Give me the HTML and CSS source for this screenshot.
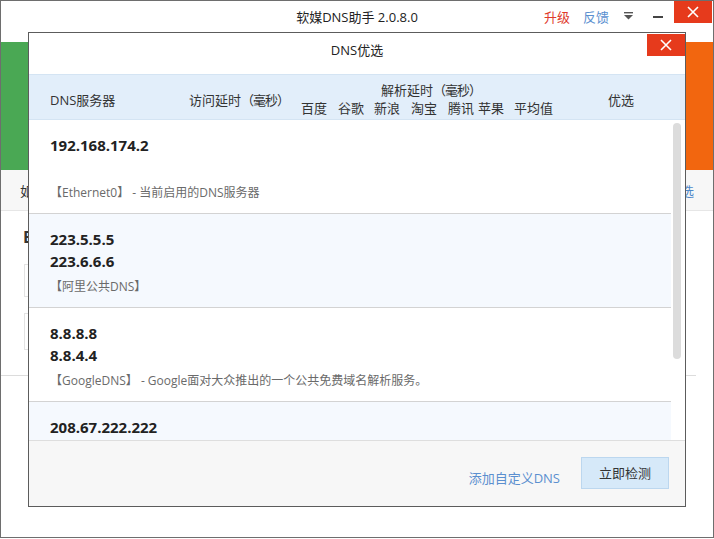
FILE: index.html
```html
<!DOCTYPE html>
<html lang="zh-CN">
<head>
<meta charset="utf-8">
<title>软媒DNS助手</title>
<link rel="stylesheet" href="styles.css">
</head>
<body>
<div class="app">
  <header class="titlebar">
    <div class="app-title">软媒DNS助手 2.0.8.0</div>
    <div class="title-actions">
      <a class="act upgrade">升级</a>
      <a class="act feedback">反馈</a>
      <span class="menu-btn"><svg width="9" height="8" viewBox="0 0 9 8"><rect x="0" y="0" width="9" height="1.4" fill="#555"/><polygon points="0,3 9,3 4.5,7.5" fill="#555"/></svg></span>
      <span class="min-btn"></span>
      <span class="close-btn"><svg width="12" height="12" viewBox="0 0 12 12"><path d="M1 1 L11 11 M11 1 L1 11" stroke="#fff" stroke-width="1.6"/></svg></span>
    </div>
  </header>
  <div class="banner"></div>
  <nav class="tabs">
    <span class="tab-left">如何选择</span>
    <span class="tab-right">一键优选</span>
  </nav>
  <section class="panel">
    <div class="panel-title">Ethernet0</div>
    <div class="field"></div>
    <div class="field field-tall"></div>
  </section>

  <div class="dialog">
    <div class="dlg-title">
      <span></span>
      <span class="dlg-name">DNS优选</span>
      <span class="dlg-close"><svg width="12" height="12" viewBox="0 0 12 12"><path d="M1 1 L11 11 M11 1 L1 11" stroke="#fff" stroke-width="1.6"/></svg></span>
    </div>
    <div class="thead">
      <div class="th th-server">DNS服务器</div>
      <div class="th th-access">访问延时<span class="paren">（毫秒）</span></div>
      <div class="th-parse">
        <div class="parse-title">解析延时<span class="paren">（毫秒）</span></div>
        <div class="parse-subs">
          <span>百度</span><span>谷歌</span><span>新浪</span><span>淘宝</span><span>腾讯</span><span>苹果</span><span>平均值</span>
        </div>
      </div>
      <div class="th th-best">优选</div>
    </div>
    <div class="list">
      <div class="rows">
        <div class="row">
          <div class="ips"><div class="ip">192.168.174.2</div></div>
          <div class="desc">【Ethernet0】 - 当前启用的DNS服务器</div>
        </div>
        <div class="row alt">
          <div class="ips"><div class="ip">223.5.5.5</div><div class="ip">223.6.6.6</div></div>
          <div class="desc">【阿里公共DNS】</div>
        </div>
        <div class="row">
          <div class="ips"><div class="ip">8.8.8.8</div><div class="ip">8.8.4.4</div></div>
          <div class="desc">【GoogleDNS】 - Google面对大众推出的一个公共免费域名解析服务。</div>
        </div>
        <div class="row alt row-last">
          <div class="ips"><div class="ip">208.67.222.222</div></div>
        </div>
      </div>
      <div class="scroll-track"><div class="scroll-thumb"></div></div>
    </div>
    <div class="dlg-footer">
      <a class="add-link">添加自定义DNS</a>
      <button class="check-btn">立即检测</button>
    </div>
  </div>
</div>
</body>
</html>
```

FILE: styles.css
```css
* { box-sizing: border-box; }
html, body { margin: 0; padding: 0; background: #fff; }
body {
  font-family: "Open Sans", "Noto Sans CJK SC", sans-serif;
  font-size: 13px;
  color: #333;
}
.app {
  position: relative;
  width: 714px;
  height: 538px;
  border: 1px solid #6e6e6e;
  background: #fff;
  overflow: hidden;
}
.titlebar {
  height: 41px;
  display: grid;
  grid-template-columns: 1fr auto 1fr;
  align-items: start;
}
.app-title {
  grid-column: 2;
  padding-top: 6px;
  line-height: 20px;
  font-size: 13px;
  color: #222;
}
.title-actions {
  grid-column: 3;
  justify-self: end;
  display: flex;
  align-items: flex-start;
}
.act { line-height: 20px; padding-top: 6px; font-size: 13px; cursor: pointer; }
.upgrade { color: #e03a2c; }
.feedback { color: #5b8fcf; margin-left: 13px; }
.menu-btn { margin-left: 15px; margin-top: 11px; display: block; height: 8px; }
.menu-btn svg { display: block; }
.min-btn { display: block; width: 10px; height: 2px; background: #444; margin-left: 20px; margin-top: 15px; }
.close-btn {
  display: flex; align-items: center; justify-content: center;
  width: 38px; height: 22px; margin-left: 11px; margin-right: 1px;
  background: #e63a1c;
}
.close-btn svg, .dlg-close svg { display: block; }
.banner {
  height: 128px;
  background: linear-gradient(to right, #4aa854 50%, #f2660f 50%);
}
.tabs {
  height: 41px;
  background: #f7f7f7;
  border-bottom: 1px solid #e6e6e6;
  display: flex;
  justify-content: space-between;
  align-items: center;
  padding: 0 19px 0 19px;
}
.tab-left { color: #333; }
.tab-right { color: #4f88c9; }
.panel {
  margin-right: 17px;
  padding: 16px 0 25px 22px;
  border-bottom: 1px solid #dcdcdc;
}
.panel-title { font-size: 16px; font-weight: bold; line-height: 20px; color: #333; }
.field { margin: 17px 30px 0 1px; height: 33px; border: 1px solid #e3e3e3; }
.field-tall { margin-top: 16px; height: 37px; }

.dialog {
  position: absolute;
  left: 27px;
  top: 31px;
  width: 658px;
  height: 475px;
  border: 1px solid #5c5c5c;
  background: #fff;
  display: flex;
  flex-direction: column;
}
.dlg-title {
  height: 41px;
  display: grid;
  grid-template-columns: 1fr auto 1fr;
  align-items: start;
}
.dlg-name { padding-top: 7px; line-height: 20px; color: #222; }
.dlg-close {
  justify-self: end;
  margin-top: 1px;
  width: 38px; height: 22px;
  background: #e63a1c;
  display: flex; align-items: center; justify-content: center;
}
.thead {
  height: 46px;
  background: #e2eefa;
  border-top: 1px solid #d4e4f3;
  border-bottom: 1px solid #d4e4f3;
  display: flex;
  align-items: flex-start;
  padding-left: 21px;
  color: #333;
}
.paren { letter-spacing: -1px; }
.th { padding-top: 16px; line-height: 18px; }
.th-server { width: 139px; }
.th-access { width: 112px; }
.th-parse { width: 307px; }
.parse-title { padding-top: 6px; line-height: 18px; margin-left: 80px; }
.parse-subs {
  display: grid;
  grid-template-columns: 37px 36px 37px 37px 30px 36px auto;
  line-height: 18px;
}
.list {
  height: 320px;
  display: flex;
}
.rows { flex: 1; overflow: hidden; }
.row {
  height: 94px;
  padding: 14px 0 10px 21px;
  border-bottom: 1px solid #d3d3d3;
  background: #fff;
}
.row.alt { background: #f5f9fe; }
.ips { height: 44px; }
.ip { line-height: 22px; font-size: 15px; font-weight: bold; color: #222; }
.desc { margin-top: 5px; line-height: 20px; font-size: 12px; color: #6a6a6a; }
.scroll-track { width: 14px; padding: 3px 4px 0 2px; }
.scroll-thumb { width: 8px; height: 236px; border-radius: 4px; background: #dcdcdc; }
.dlg-footer {
  flex: 1;
  border-top: 1px solid #dedede;
  background: #f7f7f7;
  display: flex;
  justify-content: flex-end;
  align-items: flex-start;
  padding: 16px 16px 0 0;
}
.add-link { margin-top: 11px; line-height: 20px; color: #5b8fcf; cursor: pointer; }
.check-btn {
  margin-left: 21px;
  width: 88px; height: 32px;
  border: 1px solid #bcd7ef;
  background: #d6e9f9;
  font-family: inherit;
  font-size: 13px;
  color: #333;
  line-height: 30px;
  padding: 0;
}
```
